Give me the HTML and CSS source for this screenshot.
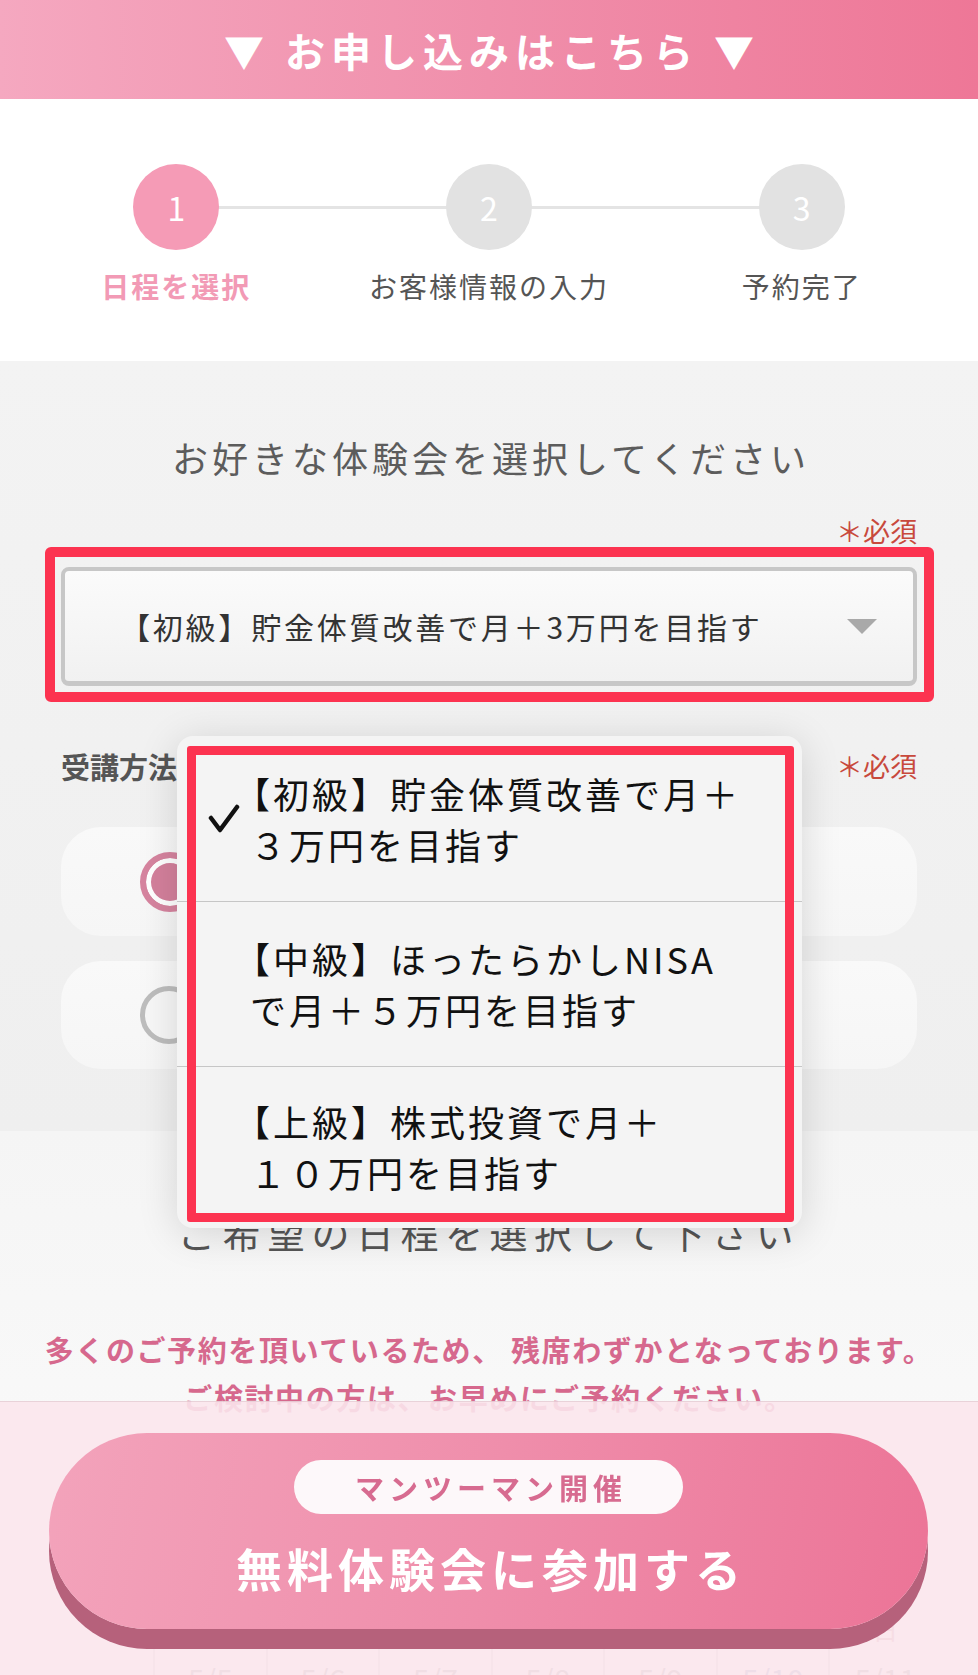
FILE: index.html
```html
<!DOCTYPE html>
<html lang="ja">
<head>
<meta charset="utf-8">
<title>お申し込み</title>
<link rel="stylesheet" href="styles.css">
</head>
<body>
<header class="apply-head">▼ お申し込みはこちら ▼</header>

<section class="steps">
  <div class="step active"><div class="num">1</div><div class="lbl">日程を選択</div></div>
  <div class="step"><div class="num">2</div><div class="lbl">お客様情報の入力</div></div>
  <div class="step last"><div class="num">3</div><div class="lbl">予約完了</div></div>
</section>

<section class="panel">
  <h2 class="panel-title">お好きな体験会を選択してください</h2>
  <div class="req-row"><span class="req">＊必須</span></div>
  <div class="mark-box">
    <div class="select">
      <span class="select-text">【初級】貯金体質改善で月＋3万円を目指す</span>
      <span class="arrow"></span>
    </div>
  </div>
  <div class="field-row"><span class="field-label">受講方法</span><span class="req">＊必須</span></div>
  <div class="radio-card"><span class="radio on"></span></div>
  <div class="radio-card second"><span class="radio"></span></div>
</section>

<section class="schedule">
  <h2 class="schedule-title">ご希望の日程を選択して下さい</h2>
  <p class="notice">多くのご予約を頂いているため、 残席わずかとなっております。<br>ご検討中の方は、お早めにご予約ください。</p>
  <div class="calendar">
    <div class="cal-row head">
      <div class="cal-cell first"></div>
      <div class="cal-cell">月</div><div class="cal-cell">火</div><div class="cal-cell">水</div><div class="cal-cell">木</div><div class="cal-cell">金</div><div class="cal-cell sat">土</div><div class="cal-cell sun">日</div>
    </div>
    <div class="cal-row">
      <div class="cal-cell first"></div>
      <div class="cal-cell">5/5</div><div class="cal-cell">5/6</div><div class="cal-cell">5/7</div><div class="cal-cell">5/8</div><div class="cal-cell">5/9</div><div class="cal-cell sat">5/10</div><div class="cal-cell">5/11</div>
    </div>
  </div>
</section>

<div class="popup">
  <div class="opt">
    <svg class="check" width="32" height="30" viewBox="0 0 32 30"><path d="M3 14 L12 26 L29 3" fill="none" stroke="#111" stroke-width="4.5" stroke-linecap="round" stroke-linejoin="round"/></svg>
    <div class="opt-text">【初級】貯金体質改善で月＋<br>３万円を目指す</div>
  </div>
  <div class="opt">
    <span class="check-space"></span>
    <div class="opt-text">【中級】ほったらかしNISA<br>で月＋５万円を目指す</div>
  </div>
  <div class="opt">
    <span class="check-space"></span>
    <div class="opt-text">【上級】株式投資で月＋<br>１０万円を目指す</div>
  </div>
  <div class="popup-mark"></div>
</div>

<div class="cta-bar">
  <div class="cta-btn">
    <div class="cta-pill">マンツーマン開催</div>
    <div class="cta-main">無料体験会に参加する</div>
  </div>
</div>
</body>
</html>
```

FILE: styles.css
```css
* { box-sizing: border-box; }
html, body { margin: 0; padding: 0; }
body {
  width: 978px;
  position: relative;
  font-family: "Noto Sans CJK JP", "Noto Sans", sans-serif;
  background: #ffffff;
  color: #333;
}

.apply-head {
  height: 99px;
  background: linear-gradient(90deg, #f5a8c0 0%, #f08fab 50%, #ee7797 100%);
  color: #fff;
  font-size: 40px;
  font-weight: 700;
  letter-spacing: 6px;
  display: flex;
  align-items: center;
  justify-content: center;
  padding-left: 6px;
}

.steps {
  height: 262px;
  padding: 65px 20px 0;
  display: grid;
  grid-template-columns: repeat(3, 1fr);
  background: #fff;
}
.step {
  position: relative;
  display: flex;
  flex-direction: column;
  align-items: center;
}
.step:not(.last)::after {
  content: "";
  position: absolute;
  top: 42px;
  left: 50%;
  width: 100%;
  height: 3px;
  background: #e4e4e4;
}
.num {
  position: relative;
  z-index: 1;
  width: 86px;
  height: 86px;
  border-radius: 50%;
  background: #e2e2e2;
  color: #fff;
  font-size: 32px;
  line-height: 86px;
  text-align: center;
}
.step.active .num { background: #f59bb6; }
.lbl {
  margin-top: 16px;
  line-height: 40px;
  font-size: 28px;
  letter-spacing: 2px;
  color: #555;
  white-space: nowrap;
}
.step.active .lbl { color: #f29ab5; font-weight: 700; }

.panel {
  background: linear-gradient(180deg, #f3f3f3 0%, #efefef 100%);
  padding: 0 61px 62px;
}
.panel-title {
  margin: 0;
  padding-top: 72px;
  line-height: 48px;
  font-size: 36px;
  font-weight: 400;
  letter-spacing: 4px;
  color: #5c5c5c;
  text-align: center;
  padding-left: 4px;
}
.req-row {
  margin-top: 37px;
  line-height: 26px;
  text-align: right;
}
.req {
  font-size: 27px;
  color: #c8493c;
}
.mark-box {
  margin: -1px -17px 0 -16px;
  border: 10px solid #fc3350;
  border-radius: 6px;
  padding: 10px 7px 6px 6px;
}
.select {
  height: 119px;
  border: 4px solid #c7c7c7;
  border-bottom-width: 5px;
  border-radius: 8px;
  background: linear-gradient(180deg, #fbfbfb 0%, #f1f1f1 100%);
  display: flex;
  align-items: center;
  padding: 0 36px 0 55px;
}
.select-text {
  flex: 1;
  font-size: 30px;
  letter-spacing: 2.8px;
  color: #333;
  white-space: nowrap;
}
.arrow {
  width: 0;
  height: 0;
  border-left: 15px solid transparent;
  border-right: 15px solid transparent;
  border-top: 15px solid #a9a9a9;
}
.field-row {
  margin-top: 47px;
  display: flex;
  justify-content: space-between;
  align-items: center;
  line-height: 34px;
}
.field-label {
  font-size: 29px;
  font-weight: 700;
  color: #555;
}
.radio-card {
  margin-top: 44px;
  height: 109px;
  border-radius: 40px;
  background: linear-gradient(180deg, #f9f9f9 0%, #f6f6f6 100%);
  display: flex;
  align-items: center;
  padding-left: 79px;
}
.radio-card.second { margin-top: 25px; height: 108px; }
.radio {
  width: 58px;
  height: 58px;
  border-radius: 50%;
  border: 5px solid #bdbdbd;
  background: #f7f7f7;
}
.radio.on {
  width: 60px;
  height: 60px;
  border: 6px solid #d6849f;
  background: #d4809c;
  box-shadow: inset 0 0 0 5px #fff;
}

.schedule {
  background: linear-gradient(180deg, #f5f5f5 0%, #fafafa 60%, #fdfdfd 100%);
  padding-top: 76px;
  height: 700px;
}
.schedule-title {
  margin: 0;
  line-height: 50px;
  font-size: 38px;
  font-weight: 400;
  letter-spacing: 6.5px;
  color: #555;
  text-align: center;
}
.notice {
  margin: 68px 0 0;
  font-size: 29px;
  font-weight: 700;
  line-height: 48px;
  letter-spacing: 1.6px;
  color: #d6688d;
  text-align: center;
}
.calendar {
  margin-top: 183px;
  padding-left: 40px;
}
.cal-row {
  display: grid;
  grid-template-columns: 113px repeat(7, 112.5px);
  height: 50px;
}
.cal-cell {
  border-left: 2px solid #d6d6d6;
  text-align: center;
  font-size: 30px;
  line-height: 50px;
  color: #999;
}
.cal-cell.first { border-left: none; }
.cal-cell.sat { color: #8896c0; }
.cal-cell.sun { color: #c98a9a; }
.cal-row.head .cal-cell { font-size: 26px; }

.popup {
  position: absolute;
  left: 177px;
  top: 736px;
  width: 625px;
  height: 492px;
  border-radius: 16px;
  background: #f4f4f4;
  box-shadow: 0 6px 40px rgba(0, 0, 0, 0.14);
  overflow: hidden;
  z-index: 5;
}
.opt {
  height: 166px;
  display: flex;
  align-items: center;
  padding-left: 31px;
  border-bottom: 1px solid #c6c6c6;
}
.opt:nth-child(2) { height: 165px; }
.opt:nth-child(3) { height: 160px; border-bottom: none; }
.check { flex: none; margin-right: 10px; }
.check-space { flex: none; width: 32px; margin-right: 10px; }
.opt-text {
  font-size: 36px;
  letter-spacing: 3px;
  line-height: 51px;
  color: #111;
  text-indent: -16px;
  white-space: nowrap;
}
.popup-mark {
  position: absolute;
  left: 10px;
  top: 10px;
  width: 607px;
  height: 476px;
  border: 9px solid #fc3350;
  border-radius: 3px;
}

.cta-bar {
  position: fixed;
  left: 0;
  bottom: 0;
  width: 978px;
  height: 274px;
  background: rgba(251, 229, 236, 0.9);
  border-top: 1px solid rgba(190, 160, 170, 0.3);
  padding: 31px 50px 0 49px;
  z-index: 10;
}
.cta-btn {
  height: 196px;
  border-radius: 98px;
  background: linear-gradient(100deg, #f3a3bb 0%, #ef8eab 50%, #ec7497 100%);
  box-shadow: 0 20px 0 #b6617b;
  display: flex;
  flex-direction: column;
  align-items: center;
  padding-top: 27px;
}
.cta-pill {
  width: 389px;
  height: 54px;
  border-radius: 27px;
  background: #fdf8fa;
  color: #d76b90;
  font-size: 29px;
  font-weight: 700;
  letter-spacing: 5px;
  line-height: 54px;
  text-align: center;
  padding-left: 5px;
}
.cta-main {
  margin-top: 23px;
  line-height: 60px;
  font-size: 46px;
  font-weight: 700;
  letter-spacing: 5px;
  color: #fff;
  padding-left: 5px;
}
```
